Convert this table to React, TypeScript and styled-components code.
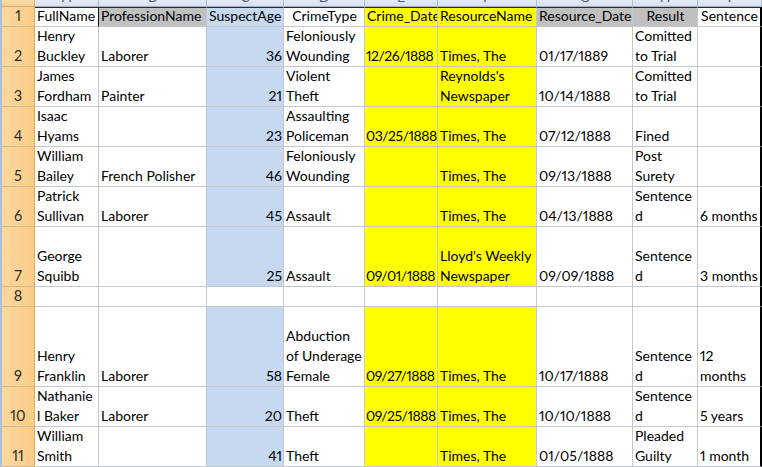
import React from "react";
import styled, { createGlobalStyle, css } from "styled-components";

const GlobalStyle = createGlobalStyle`
  html, body { margin: 0; padding: 0; background: #ffffff; overflow: hidden; }
  #root { width: 762px; height: 467px; }
`;

type Fill = "white" | "yellow" | "blue" | "grey";
type Align = "left" | "right" | "center";

const FILLS: Record<Fill, string> = {
  white: "#ffffff",
  yellow: "#ffff00",
  blue: "#c6d9f1",
  grey: "#c0c0c0",
};

const COL_WIDTHS = [35, 64, 108, 77, 81, 73, 99, 96, 65, 64];
const ROW_HEIGHTS = [7, 20, 40, 40, 40, 40, 40, 60, 20, 80, 40, 40];
const LETTERS = ["A", "B", "C", "D", "E", "F", "G", "H", "I"];

const Sheet = styled.div`
  display: grid;
  grid-template-columns: ${COL_WIDTHS.map((w) => `${w}px`).join(" ")};
  grid-template-rows: ${ROW_HEIGHTS.map((h) => `${h}px`).join(" ")};
  width: 762px;
  height: 467px;
  overflow: hidden;
  font-family: Lato, "Liberation Sans", sans-serif;
  font-size: 14px;
  font-variant-numeric: proportional-nums;
  color: #000;
`;

const Corner = styled.div`
  box-sizing: border-box;
  background: linear-gradient(#f9dcaa, #f6cf8e);
  border-right: 1px solid #eeaa55;
  border-bottom: 1px solid #c9b08a;
  border-left: 2px solid #a7c0e4;
`;

const ColHeader = styled.div`
  box-sizing: border-box;
  background: linear-gradient(#e3ebf6, #d6e1ef);
  border-right: 1px solid #a9bfd6;
  border-bottom: 1px solid #9eb4cc;
  overflow: hidden;
  display: flex;
  justify-content: center;
`;

const ColLetter = styled.span`
  display: block;
  margin-top: -13px;
  line-height: 20px;
  font-size: 14px;
  color: #4a5a70;
`;

const RowHeader = styled.div`
  box-sizing: border-box;
  background: linear-gradient(90deg, #fcd89f, #f9cd86);
  border-left: 2px solid #a7c0e4;
  border-right: 1px solid #eda84e;
  border-bottom: 1px solid #cdb895;
  display: flex;
  align-items: flex-end;
  justify-content: center;
  line-height: 20px;
  font-size: 14.5px;
  color: #2e2e2e;
`;

const Cell = styled.div<{
  $fill: Fill;
  $align: Align;
  $top?: boolean;
  $darkRight?: boolean;
  $last?: boolean;
  $compact?: boolean;
}>`
  box-sizing: border-box;
  background: ${(p) => FILLS[p.$fill]};
  border-right: 1px solid #c3c7ce;
  border-bottom: 1px solid #c3c7ce;
  display: flex;
  flex-direction: column;
  justify-content: flex-end;
  text-align: ${(p) => p.$align};
  padding: 0 1px 0 2px;
  overflow: hidden;
  line-height: 20px;
  white-space: nowrap;
  ${(p) =>
    p.$compact &&
    css`
      letter-spacing: -0.5px;
      padding-left: 1px;
    `}
  ${(p) =>
    p.$top &&
    css`
      border-top: 1px solid #2a2a2a;
    `}
  ${(p) =>
    p.$darkRight &&
    css`
      border-right: 1px solid #111;
    `}
  ${(p) =>
    p.$last &&
    css`
      border-right: 2px solid #000;
    `}
`;

const Line = styled.span`
  display: block;
  height: 20px;
`;

type CellData = { lines: string[]; fill?: Fill; align?: Align };

const HEADER: CellData[] = [
  { lines: ["FullName"] },
  { lines: ["ProfessionName"], fill: "grey" },
  { lines: ["SuspectAge"], fill: "blue" },
  { lines: ["CrimeType"], align: "center" },
  { lines: ["Crime_Date"], fill: "yellow" },
  { lines: ["ResourceName"], fill: "yellow" },
  { lines: ["Resource_Date"], fill: "grey" },
  { lines: ["Result"], fill: "grey", align: "center" },
  { lines: ["Sentence"], align: "center" },
];

const ROWS: string[][][] = [
  [["Henry", "Buckley"], ["Laborer"], ["36"], ["Feloniously", "Wounding"], ["12/26/1888"], ["Times, The"], ["01/17/1889"], ["Comitted", "to Trial"], []],
  [["James", "Fordham"], ["Painter"], ["21"], ["Violent", "Theft"], [], ["Reynolds's", "Newspaper"], ["10/14/1888"], ["Comitted", "to Trial"], []],
  [["Isaac", "Hyams"], [], ["23"], ["Assaulting", "Policeman"], ["03/25/1888"], ["Times, The"], ["07/12/1888"], ["Fined"], []],
  [["William", "Bailey"], ["French Polisher"], ["46"], ["Feloniously", "Wounding"], [], ["Times, The"], ["09/13/1888"], ["Post", "Surety"], []],
  [["Patrick", "Sullivan"], ["Laborer"], ["45"], ["Assault"], [], ["Times, The"], ["04/13/1888"], ["Sentence", "d"], ["6 months"]],
  [["George", "Squibb"], [], ["25"], ["Assault"], ["09/01/1888"], ["Lloyd's Weekly", "Newspaper"], ["09/09/1888"], ["Sentence", "d"], ["3 months"]],
  [],
  [["Henry", "Franklin"], ["Laborer"], ["58"], ["Abduction", "of Underage", "Female"], ["09/27/1888"], ["Times, The"], ["10/17/1888"], ["Sentence", "d"], ["12", "months"]],
  [["Nathanie", "l Baker"], ["Laborer"], ["20"], ["Theft"], ["09/25/1888"], ["Times, The"], ["10/10/1888"], ["Sentence", "d"], ["5 years"]],
  [["William", "Smith"], [], ["41"], ["Theft"], [], ["Times, The"], ["01/05/1888"], ["Pleaded", "Guilty"], ["1 month"]],
];

const DATA_FILLS: Fill[] = ["white", "white", "blue", "white", "yellow", "yellow", "white", "white", "white"];
const DATA_ALIGN: Align[] = ["left", "left", "right", "left", "left", "left", "left", "left", "left"];

export default function App() {
  return (
    <>
      <GlobalStyle />
      <Sheet>
        <Corner />
        {LETTERS.map((l) => (
          <ColHeader key={l}>
            <ColLetter>{l}</ColLetter>
          </ColHeader>
        ))}

        <RowHeader>1</RowHeader>
        {HEADER.map((c, i) => (
          <Cell
            key={`h${i}`}
            $fill={c.fill ?? "white"}
            $align={c.align ?? "left"}
            $top
            $darkRight={i === 0}
            $last={i === 8}
          >
            {c.lines.map((t, k) => (
              <Line key={k}>{t}</Line>
            ))}
          </Cell>
        ))}

        {ROWS.map((row, r) => {
          const empty = row.length === 0;
          return (
            <React.Fragment key={`r${r}`}>
              <RowHeader>{r + 2}</RowHeader>
              {DATA_FILLS.map((fill, c) => (
                <Cell
                  key={`c${r}-${c}`}
                  $fill={empty ? "white" : fill}
                  $align={DATA_ALIGN[c]}
                  $last={c === 8}
                  $compact={c === 4}
                >
                  {(row[c] ?? []).map((t, k) => (
                    <Line key={k}>{t}</Line>
                  ))}
                </Cell>
              ))}
            </React.Fragment>
          );
        })}
      </Sheet>
    </>
  );
}
